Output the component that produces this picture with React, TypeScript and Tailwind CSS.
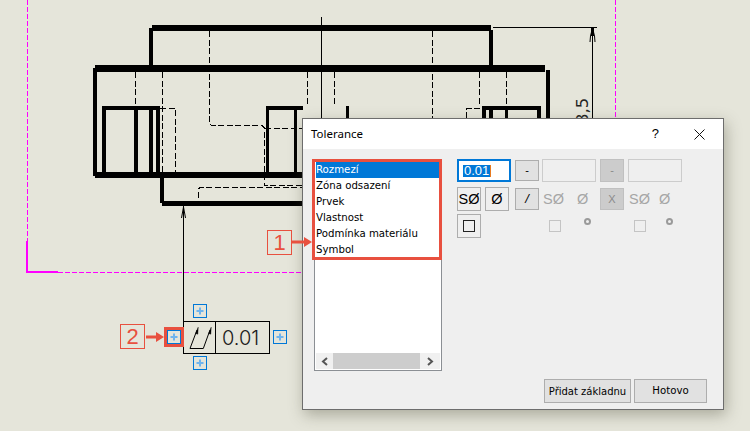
const listItems = ["Rozmezí", "Zóna odsazení", "Prvek", "Vlastnost", "Podmínka materiálu", "Symbol"];

// x, y, width, height of the heavy outline strokes
const heavy: [number, number, number, number][] = [
  [152, 25, 339, 6], [149, 28, 4, 38], [489, 30, 4, 36],
  [95, 65, 450, 7], [93, 68, 4, 108], [95, 172, 208, 6], [546, 70, 4, 48],
  [160, 178, 4, 25], [162, 201, 141, 5],
  [104, 106, 54, 4], [102, 106, 4, 67], [134, 106, 4, 67], [149, 106, 4, 67], [156, 106, 4, 67],
  [266, 106, 37, 4], [266, 106, 3, 67], [294, 106, 3, 67], [346, 106, 3, 12],
  [485, 106, 54, 4], [482, 106, 4, 12], [489, 106, 4, 12], [505, 106, 3, 12], [537, 106, 4, 12],
];

function Drawing() {
  const dashed = [
    "M135.500 72V106", "M162.500 72V172", "M160 108.500H175.500V172",
    "M209.500 31V122Q209.500 125.500 213 125.500H262L264.500 128V185.500H303",
    "M265 128.500H303", "M198.500 198V190Q198.500 187.500 201 187.500H303",
    "M307.500 72V106", "M334.500 72V106", "M432.500 31V118", "M479.500 72V106", "M506.500 72V106",
    "M466.500 118V108.500H485",
  ];
  return (
    <svg className="absolute left-0 top-0" width="750" height="431" viewBox="0 0 750 431" fill="none">
      <g fill="#000" shapeRendering="crispEdges">
        {heavy.map(([x, y, w, h]) => <rect key={`${x}-${y}-${w}`} x={x} y={y} width={w} height={h} />)}
      </g>
      <g stroke="#000" strokeWidth="1" strokeDasharray="6 2.500" shapeRendering="crispEdges">
        {dashed.map((d) => <path key={d} d={d} />)}
      </g>
      <g stroke="#000" strokeWidth="1" shapeRendering="crispEdges">
        <path d="M321.500 17V118" />
        <path d="M493 27.500H597" />
        <path d="M592.500 27V118" />
      </g>
      <path d="M592.500 28L590.500 36L590 42M592.500 28L594.500 36L595 42" stroke="#000" strokeWidth="1" />
      <path d="M591 28H594V36H591Z" fill="#000" />
      <text transform="translate(588 124) rotate(-90)" fontFamily="'DejaVu Sans', sans-serif" fontSize="16.500" fill="#222">8,5</text>
      <g stroke="#ff00ff" shapeRendering="crispEdges">
        <path d="M27.500 0V241" strokeDasharray="5 2" strokeWidth="1" />
        <path d="M615.500 0V118" strokeDasharray="5 2" strokeWidth="1" />
        <path d="M27 241V272H58" strokeWidth="2" />
        <path d="M58 272.500H303" strokeDasharray="5 2" strokeWidth="1" />
      </g>
      <path d="M183.500 206V322" stroke="#000" strokeWidth="1" shapeRendering="crispEdges" />
      <path d="M181.500 218L183.500 207L185.500 218" stroke="#000" strokeWidth="1" />
    </svg>
  );
}

function PlusBox({ className }: { className: string }) {
  return (
    <div className={`absolute flex h-[14px] w-[14px] items-center justify-center border border-[#0078d7] bg-[#e5e5da] ${className}`}>
      <svg width="10" height="10" viewBox="0 0 10 10">
        <path d="M5 1.500V8.500M1.500 5H8.500" stroke="#6fb4ee" strokeWidth="2" />
      </svg>
    </div>
  );
}

function FeatureFrame() {
  return (
    <div className="absolute left-[183px] top-[321px] flex h-[33px] w-[87px] border border-black">
      <div className="flex w-[32px] items-center justify-center border-r border-black">
        <svg width="26" height="26" viewBox="0 0 26 26" fill="none" stroke="#000" strokeWidth="1">
          <path d="M3 23.500H16.300L23 5" />
          <path d="M3 23.500L10 5" />
          <path d="M11.200 2.200L8.600 8.500L10.800 9.200Z" fill="#000" strokeWidth="0.400" />
          <path d="M24.200 2.200L21.600 8.500L23.800 9.200Z" fill="#000" strokeWidth="0.400" />
        </svg>
      </div>
      <div className="flex flex-1 items-center pl-[6px] font-['Inter',sans-serif] text-[20px] font-light text-[#1a1a1a]">
        0.01
      </div>
    </div>
  );
}

function Callout({ n, className }: { n: string; className: string }) {
  return (
    <div className={`absolute flex h-[25px] w-[25px] items-center justify-center border border-[#e8503f] bg-[#e5e5da] font-['Liberation_Sans',sans-serif] text-[22px] leading-none text-[#e8503f] ${className}`}>
      {n}
    </div>
  );
}

function Btn({ children, disabled, className = "" }: { children: React.ReactNode; disabled?: boolean; className?: string }) {
  return (
    <div className={`flex items-center justify-center border ${disabled ? "border-[#c0c0c0] bg-[#cccccc] text-[#8a8a8a]" : "border-[#adadad] bg-[#e1e1e1] text-black"} ${className}`}>
      {children}
    </div>
  );
}

function Phi({ s, disabled, className = "" }: { s?: boolean; disabled?: boolean; className?: string }) {
  return (
    <span className={`font-['Liberation_Sans',sans-serif] text-[14.500px] leading-none ${disabled ? "text-[#a6a6a6]" : "text-black"} ${className}`}>
      {s ? "S" : ""}Ø
    </span>
  );
}

function Square({ disabled }: { disabled?: boolean }) {
  return <div className={`h-[12px] w-[12px] border ${disabled ? "border-[#c4c4c4]" : "border-[#222]"}`} />;
}

function Ring() {
  return <div className="h-[7px] w-[7px] rounded-full border-2 border-[#9a9a9a]" />;
}

function Dialog() {
  return (
    <div className="absolute left-[302px] top-[118px] flex h-[292px] w-[422px] flex-col border border-[#6d6d6d] bg-[#efefef] font-['DejaVu_Sans',sans-serif] text-[10.200px] shadow-[2px_5px_14px_rgba(60,60,40,0.35)]">
      <div className="flex h-[30px] shrink-0 items-center justify-between bg-white pl-[8px] pr-[18px] text-black">
        <span className="font-['Noto_Sans',sans-serif] text-[11.500px]">Tolerance</span>
        <div className="flex items-center gap-[35px]">
          <span className="font-['Liberation_Sans',sans-serif] text-[13px]">?</span>
          <svg width="11" height="11" viewBox="0 0 11 11" stroke="#111" strokeWidth="1" fill="none">
            <path d="M0.500 0.500L10.500 10.500M10.500 0.500L0.500 10.500" />
          </svg>
        </div>
      </div>
      <div className="flex min-h-0 flex-1 pl-[11px] pr-[16px] pt-[10px]">
        <div className="flex h-[212px] w-[128px] shrink-0 flex-col justify-between border border-[#8b8f94] bg-white p-[1px]">
          <div className="pt-[1px]">
            {listItems.map((t, i) => (
              <div key={t} className={`flex h-[16px] items-center whitespace-nowrap ${i === 0 ? "bg-[#0078d7] text-white" : "text-black"}`}>{t}</div>
            ))}
          </div>
          <div className="flex h-[16px] items-center bg-[#f0f0f0]">
            <div className="flex w-[17px] justify-center">
              <svg width="8" height="9" viewBox="0 0 8 9" fill="none" stroke="#555" strokeWidth="2"><path d="M6 1L2 4.500L6 8" /></svg>
            </div>
            <div className="h-full w-[87px] bg-[#cdcdcd]" />
            <div className="flex flex-1 justify-center">
              <svg width="8" height="9" viewBox="0 0 8 9" fill="none" stroke="#555" strokeWidth="2"><path d="M2 1L6 4.500L2 8" /></svg>
            </div>
          </div>
        </div>
        <div className="ml-[15px] flex flex-1 flex-col">
          <div className="flex h-[23px] items-stretch">
            <div className="flex w-[54px] items-center border-2 border-[#0078d7] bg-white pl-[4px]">
              <span className="border-r border-[#e87a1f] bg-[#0078d7] px-[1px] font-['Liberation_Sans',sans-serif] text-[13px] leading-[12px] text-white">0.01</span>
            </div>
            <Btn className="my-[1px] ml-[4px] w-[24px]">-</Btn>
            <div className="ml-[3px] w-[54px] border border-[#cccccc] bg-[#efefef]" />
            <Btn disabled className="ml-[4px] w-[24px]">-</Btn>
            <div className="ml-[4px] w-[54px] border border-[#cccccc] bg-[#efefef]" />
          </div>
          <div className="mt-[5px] flex h-[24px] items-center">
            <Btn className="h-[24px] w-[24px] border-[#8c8c8c] !bg-[#efefef]"><Phi s /></Btn>
            <Btn className="ml-[4px] h-[24px] w-[24px] border-[#8c8c8c] !bg-[#efefef]"><Phi /></Btn>
            <Btn className="ml-[6px] h-[22px] w-[24px] font-['Liberation_Sans',sans-serif] text-[13px] italic">/</Btn>
            <Phi s disabled className="ml-[4px] w-[34px]" />
            <Phi disabled className="w-[23px]" />
            <Btn disabled className="h-[22px] w-[24px] font-['Liberation_Sans',sans-serif] text-[11px]">X</Btn>
            <Phi s disabled className="ml-[5px] w-[30px]" />
            <Phi disabled />
          </div>
          <div className="mt-[3px] flex h-[24px] items-center">
            <Btn className="h-[24px] w-[24px] border-[#8c8c8c] !bg-[#efefef]"><Square /></Btn>
            <div className="ml-[68px]"><Square disabled /></div>
            <div className="mb-[10px] ml-[23px]"><Ring /></div>
            <div className="ml-[43px]"><Square disabled /></div>
            <div className="mb-[10px] ml-[20px]"><Ring /></div>
          </div>
          <div className="mb-[6px] mt-auto flex justify-end gap-[3px]">
            <Btn className="h-[24px] w-[87px] whitespace-nowrap text-[10px]">Přidat základnu</Btn>
            <Btn className="h-[24px] w-[73px]">Hotovo</Btn>
          </div>
        </div>
      </div>
    </div>
  );
}

export default function App() {
  return (
    <div className="relative h-[431px] w-[750px] overflow-hidden bg-[#e5e5da]">
      <Drawing />
      <PlusBox className="left-[193px] top-[304px]" />
      <PlusBox className="left-[193px] top-[356px]" />
      <PlusBox className="left-[273px] top-[330px]" />
      <FeatureFrame />
      <div className="absolute left-[164px] top-[327px] h-[20px] w-[20px] bg-[#e8503f]">
        <PlusBox className="left-[3px] top-[3px]" />
      </div>
      <Callout n="2" className="left-[120px] top-[324px]" />
      <svg className="absolute left-[146px] top-[331px]" width="19" height="12" viewBox="0 0 19 12">
        <path d="M0 4.500H10V1L18 6L10 11V7.500H0Z" fill="#e8503f" />
      </svg>
      <Dialog />
      <div className="absolute left-[312px] top-[159px] h-[101px] w-[130px] border-[3px] border-[#e8503f]" />
      <Callout n="1" className="left-[267px] top-[230px]" />
      <svg className="absolute left-[292px] top-[236px]" width="21" height="12" viewBox="0 0 21 12">
        <path d="M0 4.500H12V1L20 6L12 11V7.500H0Z" fill="#e8503f" />
      </svg>
    </div>
  );
}
